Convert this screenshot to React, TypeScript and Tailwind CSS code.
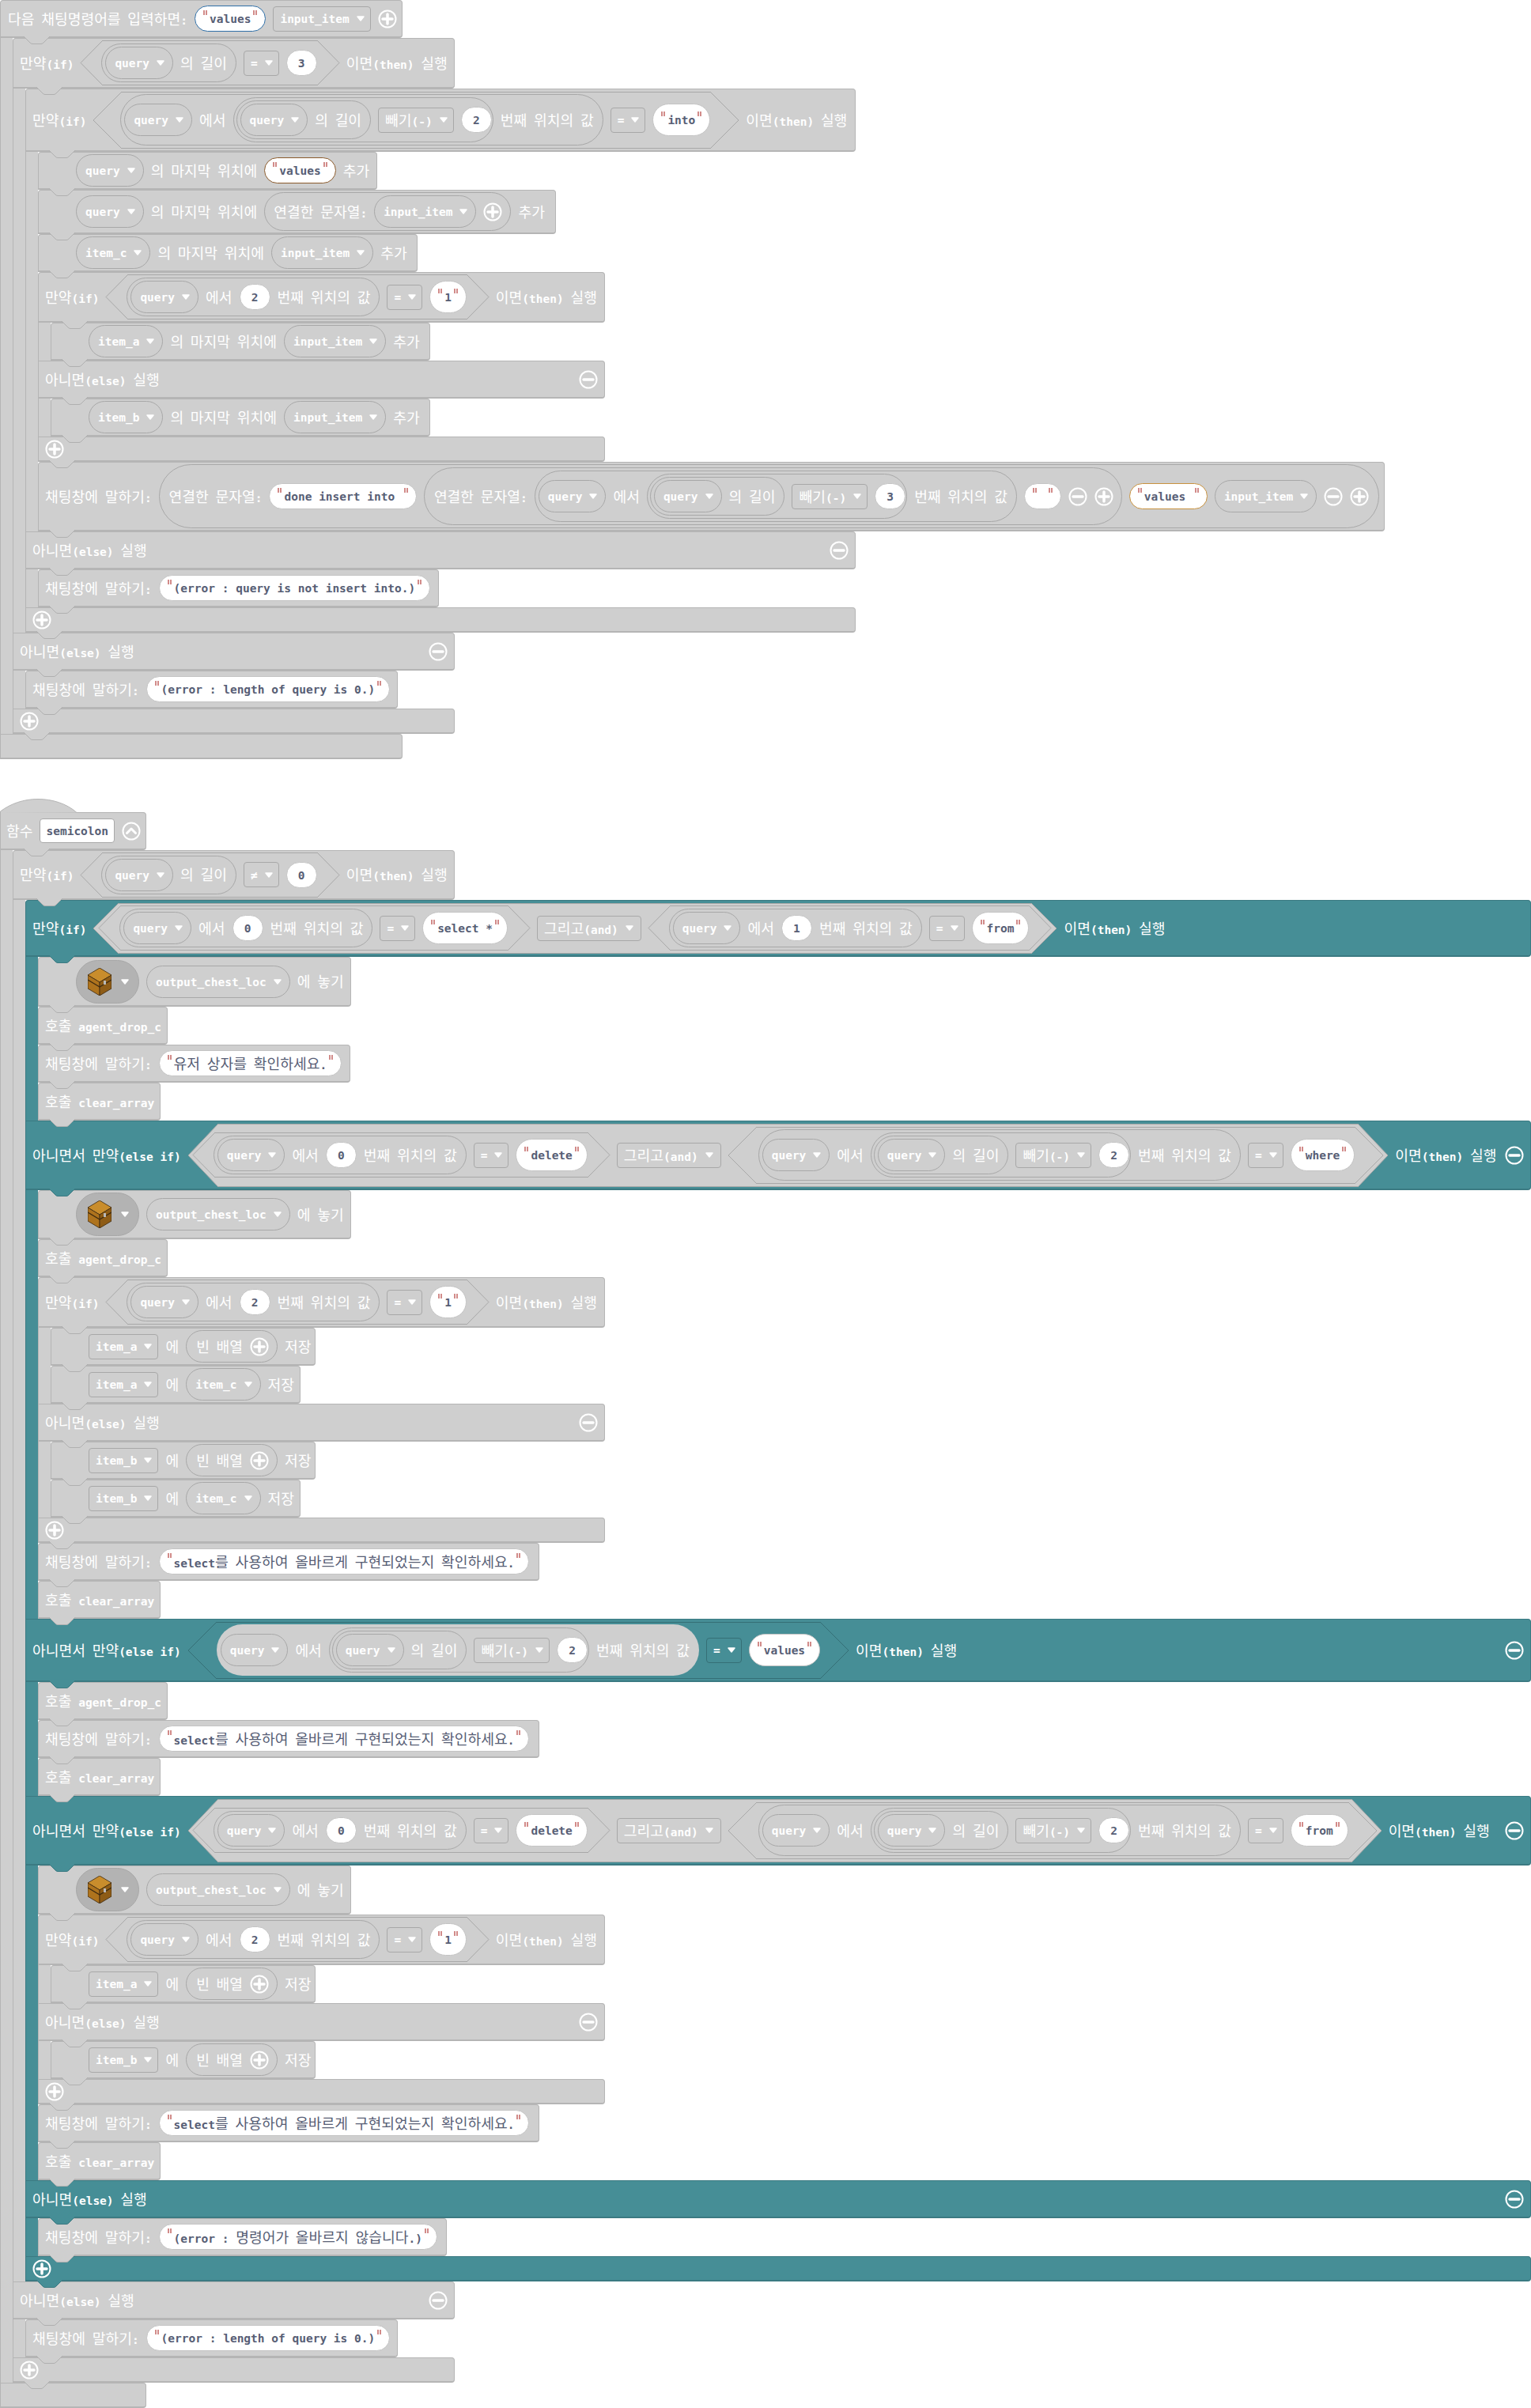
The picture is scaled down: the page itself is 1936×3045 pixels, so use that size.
import type { ReactNode } from "react";

const GRAY = "bg-[#cfcfcf] border-[#b5b5b5]";
const TEAL = "bg-[#468e96] border-[#3b7a82]";

// latin text is bold mono, hangul is a lighter, slightly larger face
function T({ children, className = "" }: { children: string; className?: string }) {
  const parts = children.split(/([\uac00-\ud7a3]+)/);
  return (
    <span className={`shrink-0 whitespace-pre leading-none ${className}`}>
      {parts.map((p, i) =>
        /[\uac00-\ud7a3]/.test(p) ? (
          <span key={i} className="font-['Noto_Sans_CJK_KR',sans-serif] text-[18.2px] font-normal">
            {p}
          </span>
        ) : (
          <span key={i} className="font-['DejaVu_Sans_Mono','Noto_Sans_CJK_KR',monospace] text-[14.5px] font-bold">
            {p}
          </span>
        ),
      )}
    </span>
  );
}

function Caret() {
  return (
    <svg viewBox="0 0 10 7" className="h-[7px] w-[10px] shrink-0">
      <path d="M1 1 H9 L5 6 Z" fill="#fff" stroke="#fff" strokeWidth="1.5" strokeLinejoin="round" />
    </svg>
  );
}

function Var({ children }: { children: string }) {
  return (
    <div className="flex h-[41px] shrink-0 items-center gap-[9px] rounded-full border border-[#a8a8a8] pl-[11px] pr-[10px] text-white">
      <T>{children}</T>
      <Caret />
    </div>
  );
}

function Rect({ children, teal = false, wide = false }: { children: string; teal?: boolean; wide?: boolean }) {
  return (
    <div
      className={`flex h-[32px] shrink-0 items-center gap-[9px] rounded-[4px] border pl-2 text-white ${
        wide ? "pr-[9px]" : "pr-[7px]"
      } ${teal ? "border-[#356f76]" : "border-[#a8a8a8]"}`}
    >
      <T>{children}</T>
      <Caret />
    </div>
  );
}

function Num({ children }: { children: string }) {
  return (
    <div className="flex h-[33px] w-[39px] shrink-0 items-center justify-center rounded-full border border-[#c4c4c4] bg-white text-[#575e75]">
      <T>{children}</T>
    </div>
  );
}

function Quote() {
  return (
    <svg viewBox="0 0 5 6" className="h-[6px] w-[5px]">
      <path d="M1 0 V6 M4 0 V6" stroke="#b5403c" strokeWidth="1.2" />
    </svg>
  );
}

function Str({
  children,
  tall = false,
  edge = "border-[#c4c4c4]",
}: {
  children: string;
  tall?: boolean;
  edge?: string;
}) {
  return (
    <div
      className={`relative flex shrink-0 items-center justify-center rounded-full border bg-white px-[18px] text-[#575e75] ${edge} ${
        tall ? "h-[41px]" : "h-[33px]"
      }`}
    >
      <T>{children}</T>
      <span className={`absolute left-[10px] ${tall ? "top-[9px]" : "top-[5px]"}`}>
        <Quote />
      </span>
      <span className={`absolute right-[10px] ${tall ? "top-[9px]" : "top-[5px]"}`}>
        <Quote />
      </span>
    </div>
  );
}

function Btn({ kind }: { kind: "plus" | "minus" | "up" }) {
  return (
    <svg viewBox="0 0 24 24" className="h-[24px] w-[24px] shrink-0">
      <circle cx="12" cy="12" r="10.5" fill="none" stroke="#fff" strokeWidth="2" />
      {kind === "up" ? (
        <path d="M6.5 14.5 L12 9 L17.5 14.5" fill="none" stroke="#fff" strokeWidth="3" strokeLinecap="round" strokeLinejoin="round" />
      ) : (
        <path d={kind === "plus" ? "M6 12 H18 M12 6 V18" : "M6 12 H18"} stroke="#fff" strokeWidth="3.5" strokeLinecap="round" />
      )}
    </svg>
  );
}

const RING = { 1: "h-[49px]", 2: "h-[57px]", 3: "h-[65px]", 4: "h-[73px]", 5: "h-[81px]" };

function Ring({
  lvl = 1,
  className = "pl-1 pr-[11px]",
  edge = "border-[#a8a8a8]",
  children,
}: {
  lvl?: 1 | 2 | 3 | 4 | 5;
  className?: string;
  edge?: string;
  children: ReactNode;
}) {
  return (
    <div className={`flex shrink-0 items-center gap-[9px] rounded-full border bg-[#cfcfcf] text-white ${RING[lvl]} ${edge} ${className}`}>
      {children}
    </div>
  );
}

const HEX = {
  sm: { h: "h-[57px]", cap: "w-[28px]" },
  md: { h: "h-[64px]", cap: "w-[32px]" },
  lg: { h: "h-[72px]", cap: "w-[36px]" },
  xl: { h: "h-[80px]", cap: "w-[38px]" },
};

function Hex({
  size = "sm",
  teal = false,
  inner = "-ml-[2px]",
  children,
}: {
  size?: keyof typeof HEX;
  teal?: boolean;
  inner?: string;
  children: ReactNode;
}) {
  const s = HEX[size];
  const stroke = teal ? "#356f76" : "#a8a8a8";
  const fill = teal ? "none" : "#cfcfcf";
  const cap = (d: string) => (
    <svg viewBox="0 0 24 100" preserveAspectRatio="none" className={`h-full shrink-0 overflow-visible ${s.cap}`}>
      <path d={d} fill={fill} stroke={stroke} strokeWidth="1" vectorEffect="non-scaling-stroke" />
    </svg>
  );
  return (
    <div className={`flex shrink-0 items-stretch ${s.h}`}>
      {cap("M24 0 L0 50 L24 100")}
      <div className={`flex items-center border-y ${teal ? "border-[#356f76]" : "border-[#a8a8a8] bg-[#cfcfcf]"}`}>
        <div className={`relative z-[1] flex items-center gap-[9px] ${inner}`}>{children}</div>
      </div>
      {cap("M0 0 L24 50 L0 100")}
    </div>
  );
}

function Tab({ teal, child }: { teal: boolean; child: boolean }) {
  return (
    <svg
      viewBox="0 0 33 11"
      className={`absolute top-full z-20 h-[11px] w-[33px] ${child ? "left-[29px]" : "left-[13px]"}`}
    >
      <path
        d="M0 -1 L0 0 L8 8 Q9.5 9.5 11 9.5 H22 Q23.5 9.5 25 8 L33 0 L33 -1 Z"
        fill={teal ? "#468e96" : "#cfcfcf"}
        stroke={teal ? "#3b7a82" : "#b0b0b0"}
        strokeWidth="1"
      />
    </svg>
  );
}

function Row({
  className,
  tab = "own",
  teal = false,
  flat = false,
  children,
}: {
  className: string;
  tab?: "own" | "child" | "none";
  teal?: boolean;
  flat?: boolean;
  children?: ReactNode;
}) {
  return (
    <div
      className={`relative flex shrink-0 items-center gap-[9px] rounded-r-[4px] border border-b-2 text-white ${
        flat ? "" : "rounded-tl-[4px]"
      } ${teal ? TEAL : GRAY} ${className}`}
    >
      {children}
      {tab !== "none" && <Tab teal={teal} child={tab === "child"} />}
    </div>
  );
}

function Rail({ teal = false, children }: { teal?: boolean; children: ReactNode }) {
  return (
    <div className="flex">
      <div className={`w-4 shrink-0 border-l ${teal ? TEAL : GRAY}`} />
      <div className="flex flex-col">{children}</div>
    </div>
  );
}

function Chest() {
  return (
    <svg viewBox="0 0 30 35" className="h-[35px] w-[30px] shrink-0">
      <path d="M15 0 L30 9 L15 18 L0 9 Z" fill="#c98d2c" stroke="#3d2a10" strokeWidth="0.8" />
      <path d="M0 9 L15 18 V35 L0 26 Z" fill="#ae731d" stroke="#3d2a10" strokeWidth="0.8" />
      <path d="M30 9 L15 18 V35 L30 26 Z" fill="#8e5c16" stroke="#3d2a10" strokeWidth="0.8" />
      <path d="M0 15 L15 24 L30 15" fill="none" stroke="#3d2a10" strokeWidth="1.2" />
      <rect x="20" y="16" width="3" height="5" fill="#b9b9b9" />
    </svg>
  );
}

const LBL = "pl-2 pr-2";
const IND = "pl-[47px] pr-2";

const query = <Var>query</Var>;

const lenRing = (lvl: 1 = 1) => (
  <Ring lvl={lvl}>
    {query}
    <T>의 길이</T>
  </Ring>
);

const idxRing = (n: string) => (
  <Ring>
    {query}
    <T>에서</T>
    <Num>{n}</Num>
    <T>번째 위치의 값</T>
  </Ring>
);

const lenMinus = (n: string) => (
  <Ring lvl={2} className="pl-[3px] pr-px">
    {lenRing()}
    <Rect>빼기(-)</Rect>
    <Num>{n}</Num>
  </Ring>
);

const fromEnd = (n: string, edge?: string) => (
  <Ring lvl={3} edge={edge} className="pl-1 pr-[11px]">
    {query}
    <T>에서</T>
    {lenMinus(n)}
    <T>번째 위치의 값</T>
  </Ring>
);

const IfLabel = () => <T>만약(if)</T>;
const Then = () => <T>이면(then) 실행</T>;

function Say({ text, className, tab = "own" }: { text: string; className: string; tab?: "own" | "none" }) {
  return (
    <Row className={`h-12 ${LBL} ${className}`} tab={tab}>
      <T>채팅창에 말하기:</T>
      <Str>{text}</Str>
    </Row>
  );
}

function Call({ name, className }: { name: string; className: string }) {
  return (
    <Row className={`h-12 ${LBL} ${className}`}>
      <T>{`호출 ${name}`}</T>
    </Row>
  );
}

function Append({ list, children, className }: { list: string; children: ReactNode; className: string }) {
  return (
    <Row className={`h-12 ${IND} ${className}`}>
      <Var>{list}</Var>
      <T>의 마지막 위치에</T>
      {children}
      <T>추가</T>
    </Row>
  );
}

function Drop({ first = false }: { first?: boolean }) {
  return (
    <Row className={`${first ? "h-[63px]" : "h-[62px]"} ${IND} w-[396px]`}>
      <div className="flex h-[55px] w-[80px] shrink-0 items-center gap-[12px] rounded-full border border-[#a8a8a8] bg-[#b3b3b3] pl-[14px]">
        <Chest />
        <Caret />
      </div>
      <Var>output_chest_loc</Var>
      <T>에 놓기</T>
    </Row>
  );
}

function Else({ className, teal = false }: { className: string; teal?: boolean }) {
  return (
    <Row className={`h-12 justify-between pl-2 pr-2 ${className}`} tab="child" teal={teal} flat>
      <T>아니면(else) 실행</T>
      <Btn kind="minus" />
    </Row>
  );
}

function Foot({ className, teal = false }: { className: string; teal?: boolean }) {
  return (
    <Row className={`h-8 pl-2 ${className}`} teal={teal} flat>
      <Btn kind="plus" />
    </Row>
  );
}

function SimpleIf() {
  return (
    <Row className={`h-16 ${LBL} w-[717px]`} tab="child">
      <IfLabel />
      <Hex>
        {idxRing("2")}
        <Rect>=</Rect>
        <Str tall>1</Str>
      </Hex>
      <Then />
    </Row>
  );
}

function SetArr({ name, empty }: { name: string; empty: boolean }) {
  return (
    <Row className={`h-12 ${IND} ${empty ? "w-[335px]" : "w-[316px]"}`}>
      <Rect>{name}</Rect>
      <T>에</T>
      {empty ? (
        <div className="flex h-[41px] shrink-0 items-center gap-[9px] rounded-full border border-[#a8a8a8] pl-3 pr-[10px]">
          <T>빈 배열</T>
          <Btn kind="plus" />
        </div>
      ) : (
        <Var>item_c</Var>
      )}
      <T>저장</T>
    </Row>
  );
}

function TopScript() {
  return (
    <div className="flex flex-col">
      <Row className="h-12 w-[509px] pl-[9px]" tab="child">
        <T>다음 채팅명령어를 입력하면:</T>
        <Str edge="border-[#2f6fa7]">values</Str>
        <Rect>input_item</Rect>
        <Btn kind="plus" />
      </Row>
      <Rail>
        <Row className={`h-16 ${LBL} w-[559px]`} tab="child">
          <IfLabel />
          <Hex>
            {lenRing()}
            <Rect>=</Rect>
            <Num>3</Num>
          </Hex>
          <Then />
        </Row>
        <Rail>
          <Row className={`h-20 ${LBL} w-[1050px]`} tab="child">
            <IfLabel />
            <Hex size="lg">
              {fromEnd("2")}
              <Rect>=</Rect>
              <Str tall>into</Str>
            </Hex>
            <Then />
          </Row>
          <Rail>
            <Append list="query" className="w-[429px]">
              <Str edge="border-[#8a5a2b]">values</Str>
            </Append>
            <Append list="query" className="h-14 w-[655px]">
              <Ring className="pl-[11px] pr-[10px]">
                <T>연결한 문자열:</T>
                <Var>input_item</Var>
                <Btn kind="plus" />
              </Ring>
            </Append>
            <Append list="item_c" className="w-[480px]">
              <Var>input_item</Var>
            </Append>
            <SimpleIf />
            <Rail>
              <Append list="item_a" className="w-[480px]">
                <Var>input_item</Var>
              </Append>
            </Rail>
            <Else className="w-[717px]" />
            <Rail>
              <Append list="item_b" className="w-[480px]">
                <Var>input_item</Var>
              </Append>
            </Rail>
            <Foot className="w-[717px]" />
            <Row className={`h-[88px] ${LBL} w-[1703px]`}>
              <T>채팅창에 말하기:</T>
              <Ring lvl={5} className="pl-3 pr-3">
                <T>연결한 문자열:</T>
                <Str>{"done insert into\u00a0"}</Str>
                <Ring lvl={4} className="pl-3 pr-[10px]">
                  <T>연결한 문자열:</T>
                  {fromEnd("3")}
                  <Str>{"\u00a0"}</Str>
                  <Btn kind="minus" />
                  <Btn kind="plus" />
                </Ring>
                <Str edge="border-[#c8923f]">{"values\u00a0"}</Str>
                <Var>input_item</Var>
                <Btn kind="minus" />
                <Btn kind="plus" />
              </Ring>
            </Row>
          </Rail>
          <Else className="w-[1050px]" />
          <Rail>
            <Say text="(error : query is not insert into.)" className="w-[507px]" />
          </Rail>
          <Foot className="w-[1050px]" />
        </Rail>
        <Else className="w-[559px]" />
        <Rail>
          <Say text="(error : length of query is 0.)" className="w-[471px]" />
        </Rail>
        <Foot className="w-[559px]" />
      </Rail>
      <Row className="h-8 w-[509px]" tab="none" flat />
    </div>
  );
}

function ElseIfHead({ word, where }: { word: string; where: string }) {
  return (
    <Row className="h-[88px] w-[1904px] pl-2 pr-2" teal tab="child" flat>
      <T>아니면서 만약(else if)</T>
      <Hex size="xl" inner="-mx-[32px]">
        <Hex>
          {idxRing("0")}
          <Rect>=</Rect>
          <Str tall>{word}</Str>
        </Hex>
        <Rect wide>그리고(and)</Rect>
        <Hex size="lg" inner="ml-[2px]">
          {fromEnd("2")}
          <Rect>=</Rect>
          <Str tall>{where}</Str>
        </Hex>
      </Hex>
      <Then />
      <span className="ml-auto">
        <Btn kind="minus" />
      </span>
    </Row>
  );
}

function SecondScript() {
  return (
    <div className="mt-[50px] flex flex-col">
      <svg viewBox="0 0 98 18" className="relative z-10 -mb-px block h-[18px] w-[98px]">
        <path d="M0.5 18 V16 C14 6 30 0.5 48 0.5 C66 0.5 84 6 97 17.5" fill="#cfcfcf" stroke="#b5b5b5" />
      </svg>
      <Row className="h-12 w-[185px] rounded-tl-none pl-[7px]" tab="child">
        <T>함수</T>
        <div className="flex h-[31px] items-center rounded-[4px] border border-[#a8a8a8] bg-white px-[7px] text-[#575e75]">
          <T>semicolon</T>
        </div>
        <Btn kind="up" />
      </Row>
      <Rail>
        <Row className={`h-[63px] ${LBL} w-[559px]`} tab="child">
          <IfLabel />
          <Hex>
            {lenRing()}
            <Rect>≠</Rect>
            <Num>0</Num>
          </Hex>
          <Then />
        </Row>
        <Rail>
          <Row className="h-[72px] w-[1904px] pl-2 pr-2" teal tab="child">
            <IfLabel />
            <Hex size="md" inner="-mx-[25px]">
              <Hex>
                {idxRing("0")}
                <Rect>=</Rect>
                <Str tall>select *</Str>
              </Hex>
              <Rect wide>그리고(and)</Rect>
              <Hex>
                {idxRing("1")}
                <Rect>=</Rect>
                <Str tall>from</Str>
              </Hex>
            </Hex>
            <Then />
          </Row>
          <Rail teal>
            <Drop first />
            <Call name="agent_drop_c" className="w-[164px]" />
            <Say text="유저 상자를 확인하세요." className="w-[395px]" />
            <Call name="clear_array" className="w-[155px]" />
          </Rail>
          <ElseIfHead word="delete" where="where" />
          <Rail teal>
            <Drop />
            <Call name="agent_drop_c" className="w-[164px]" />
            <SimpleIf />
            <Rail>
              <SetArr name="item_a" empty />
              <SetArr name="item_a" empty={false} />
            </Rail>
            <Else className="w-[717px]" />
            <Rail>
              <SetArr name="item_b" empty />
              <SetArr name="item_b" empty={false} />
            </Rail>
            <Foot className="w-[717px]" />
            <Say text="select를 사용하여 올바르게 구현되었는지 확인하세요." className="w-[634px]" />
            <Call name="clear_array" className="w-[155px]" />
          </Rail>
          <Row className="h-20 w-[1904px] pl-2 pr-2" teal tab="child" flat>
            <T>아니면서 만약(else if)</T>
            <Hex size="lg" teal inner="">
              {fromEnd("2", "border-transparent")}
              <Rect teal>=</Rect>
              <Str tall>values</Str>
            </Hex>
            <Then />
            <span className="ml-auto">
              <Btn kind="minus" />
            </span>
          </Row>
          <Rail teal>
            <Call name="agent_drop_c" className="w-[164px]" />
            <Say text="select를 사용하여 올바르게 구현되었는지 확인하세요." className="w-[634px]" />
            <Call name="clear_array" className="w-[155px]" />
          </Rail>
          <ElseIfHead word="delete" where="from" />
          <Rail teal>
            <Drop />
            <SimpleIf />
            <Rail>
              <SetArr name="item_a" empty />
            </Rail>
            <Else className="w-[717px]" />
            <Rail>
              <SetArr name="item_b" empty />
            </Rail>
            <Foot className="w-[717px]" />
            <Say text="select를 사용하여 올바르게 구현되었는지 확인하세요." className="w-[634px]" />
            <Call name="clear_array" className="w-[155px]" />
          </Rail>
          <Else className="w-[1904px]" teal />
          <Rail teal>
            <Say text="(error : 명령어가 올바르지 않습니다.)" className="w-[517px]" />
          </Rail>
          <Foot className="w-[1904px]" teal />
        </Rail>
        <Else className="w-[559px]" />
        <Rail>
          <Say text="(error : length of query is 0.)" className="w-[471px]" />
        </Rail>
        <Foot className="w-[559px]" />
      </Rail>
      <Row className="h-8 w-[185px]" tab="none" flat />
    </div>
  );
}

export default function App() {
  return (
    <div className="min-h-[3045px] w-[1936px] overflow-hidden bg-white">
      <TopScript />
      <SecondScript />
    </div>
  );
}
